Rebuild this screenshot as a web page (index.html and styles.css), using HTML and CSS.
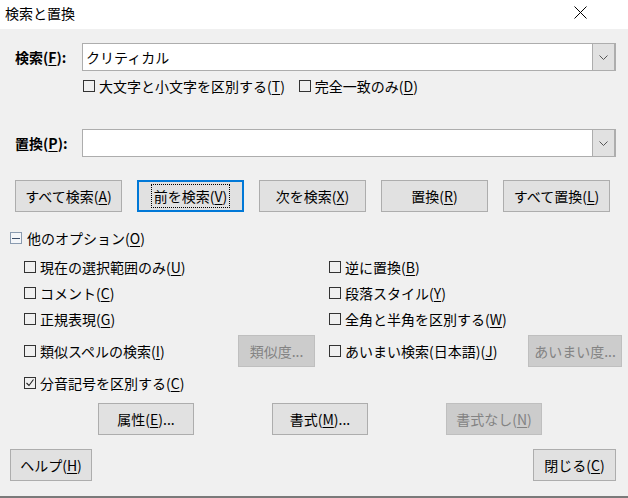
FILE: index.html
```html
<!DOCTYPE html>
<html lang="ja">

<head>
    <meta charset="UTF-8">
    <meta name="viewport" content="width=device-width, initial-scale=1.0">

    <link rel="stylesheet" href="styles.css">
</head>

<body>
    <div class="dialog">
        <div class="titlebar">
            <span class="title">検索と置換</span>
            <svg class="close" width="13" height="13" viewBox="0 0 13 13">
                <path d="M0.5 0.5 L12.5 12.5 M12.5 0.5 L0.5 12.5" stroke="#000" stroke-width="1" fill="none" />
            </svg>
        </div>

        <div class="field search">
            <label class="field-label">検索(<u>F</u>):</label>
            <div class="combo">
                <span class="combo-text">クリティカル</span>
                <span class="combo-btn">
                    <svg width="9" height="5" viewBox="0 0 9 5">
                        <polyline points="0.5,0.5 4.5,4.5 8.5,0.5" stroke="#555" stroke-width="1" fill="none" />
                    </svg>
                </span>
            </div>
        </div>

        <div class="match-row">
            <label class="check"><span class="box"></span><span>大文字と小文字を区別する(<u>T</u>)</span></label>
            <label class="check"><span class="box"></span><span>完全一致のみ(<u>D</u>)</span></label>
        </div>

        <div class="field replace">
            <label class="field-label">置換(<u>P</u>):</label>
            <div class="combo">
                <span class="combo-text"></span>
                <span class="combo-btn">
                    <svg width="9" height="5" viewBox="0 0 9 5">
                        <polyline points="0.5,0.5 4.5,4.5 8.5,0.5" stroke="#555" stroke-width="1" fill="none" />
                    </svg>
                </span>
            </div>
        </div>

        <div class="action-row">
            <button class="btn"><span>すべて検索(<u>A</u>)</span></button>
            <button class="btn focused"><span class="focus-rect">前を検索(<u>V</u>)</span></button>
            <button class="btn"><span>次を検索(<u>X</u>)</span></button>
            <button class="btn"><span>置換(<u>R</u>)</span></button>
            <button class="btn"><span>すべて置換(<u>L</u>)</span></button>
        </div>

        <div class="expander">
            <span class="minus-box"><span class="minus"></span></span><span>他のオプション(<u>O</u>)</span>
        </div>

        <div class="options">
            <label class="check"><span class="box"></span><span>現在の選択範囲のみ(<u>U</u>)</span></label>
            <span></span>
            <label class="check"><span class="box"></span><span>逆に置換(<u>B</u>)</span></label>
            <span></span>

            <label class="check"><span class="box"></span><span>コメント(<u>C</u>)</span></label>
            <span></span>
            <label class="check"><span class="box"></span><span>段落スタイル(<u>Y</u>)</span></label>
            <span></span>

            <label class="check"><span class="box"></span><span>正規表現(<u>G</u>)</span></label>
            <span></span>
            <label class="check"><span class="box"></span><span>全角と半角を区別する(<u>W</u>)</span></label>
            <span></span>

            <label class="check"><span class="box"></span><span>類似スペルの検索(<u>I</u>)</span></label>
            <button class="btn disabled similar"><span>類似度...</span></button>
            <label class="check"><span class="box"></span><span>あいまい検索(日本語)(<u>J</u>)</span></label>
            <button class="btn disabled fuzzy"><span>あいまい度...</span></button>

            <label class="check">
                <span class="box">
                    <svg width="10" height="10" viewBox="0 0 10 10">
                        <polyline points="1.5,5 4,7.5 8.5,1.5" stroke="#222" stroke-width="1.1" fill="none" />
                    </svg>
                </span><span>分音記号を区別する(<u>C</u>)</span>
            </label>
        </div>

        <div class="attr-row">
            <button class="btn"><span>属性(<u>E</u>)...</span></button>
            <button class="btn"><span>書式(<u>M</u>)...</span></button>
            <button class="btn disabled"><span>書式なし(<u>N</u>)</span></button>
        </div>

        <div class="footer">
            <button class="btn help"><span>ヘルプ(<u>H</u>)</span></button>
            <button class="btn close-btn"><span>閉じる(<u>C</u>)</span></button>
        </div>
    </div>
</body>

</html>
```

FILE: styles.css
```css
body {
    margin: 0;
    background: #f0f0f0;
    font-family: 'Noto Sans CJK JP', 'Noto Sans', sans-serif;
    font-size: 14px;
    line-height: 20px;
    color: #000;
}

u {
    text-underline-offset: 2px;
}

.dialog {
    width: 628px;
    height: 498px;
    box-sizing: border-box;
    border-bottom: 2px solid #7a7a7a;
    background: #f0f0f0;
}

.titlebar {
    height: 29px;
    background: #fff;

    display: flex;
    align-items: center;
    justify-content: space-between;
    padding: 0 41px 4px 5px;
    box-sizing: border-box;
}

/* search / replace fields */

.field {
    display: flex;
    align-items: center;
    padding: 0 12px 0 15px;
    height: 28px;
}

.search {
    margin-top: 14px;
}

.replace {
    margin-top: 33px;
}

.field-label {
    width: 67px;
    font-weight: 700;
}

.combo {
    flex: 1;
    height: 28px;
    box-sizing: border-box;
    border: 1px solid #adadad;
    background: #fff;

    display: flex;
    align-items: stretch;
}

.combo-text {
    flex: 1;
    padding-left: 3px;
    line-height: 26px;
}

.combo-btn {
    width: 21px;
    background: #e1e1e1;
    border-left: 1px solid #adadad;
    border-right: 1px solid #adadad;

    display: flex;
    align-items: center;
    justify-content: center;
}

/* checkboxes */

.check {
    display: flex;
    align-items: center;
    gap: 4px;
    white-space: nowrap;
}

.box {
    width: 12px;
    height: 12px;
    box-sizing: border-box;
    border: 1px solid #333;
    flex-shrink: 0;

    display: flex;
    align-items: center;
    justify-content: center;
}

.match-row {
    margin-top: 5px;
    height: 20px;
    padding-left: 83px;

    display: flex;
    gap: 14px;
}

/* buttons */

.btn {
    appearance: none;
    height: 32px;
    padding: 0;
    box-sizing: border-box;

    background: #e1e1e1;
    border: 1px solid #adadad;
    border-radius: 0;

    font-family: inherit;
    font-size: 14px;
    color: #000;

    display: flex;
    align-items: center;
    justify-content: center;
}

.btn.focused {
    border: 2px solid #0078d7;
}

.focus-rect {
    outline: 1px dotted #000;
    padding: 1px 2px;
}

.btn.disabled {
    background: #cccccc;
    border-color: #bfbfbf;
    color: #838383;
}

.action-row {
    margin-top: 23px;
    padding-left: 15px;

    display: flex;
    gap: 15px;
}

.action-row .btn {
    width: 107px;
}

.expander {
    margin-top: 16px;
    height: 20px;
    padding-left: 10px;

    display: flex;
    align-items: center;
    gap: 5px;
}

.minus-box {
    width: 12px;
    height: 12px;
    box-sizing: border-box;
    border: 1px solid #8a9bb0;
    background: #f4f6f9;

    display: flex;
    align-items: center;
    justify-content: center;
}

.minus {
    width: 8px;
    height: 1px;
    background: #3c4f6a;
}

/* other options */

.options {
    margin-top: 6px;
    padding-left: 24px;

    display: grid;
    grid-template-columns: 214px 91px 199px 94px;
    grid-template-rows: 26px 26px 26px 38px 26px;
    align-items: center;
}

.options .similar {
    width: 77px;
}

.options .fuzzy {
    width: 94px;
}

.attr-row {
    margin-top: 7px;
    padding-left: 98px;

    display: flex;
    gap: 78px;
}

.attr-row .btn {
    width: 96px;
}

.footer {
    margin-top: 14px;
    padding: 0 12px 0 10px;

    display: flex;
    justify-content: space-between;
}

.footer .help {
    width: 82px;
}

.footer .close-btn {
    width: 83px;
}
```
